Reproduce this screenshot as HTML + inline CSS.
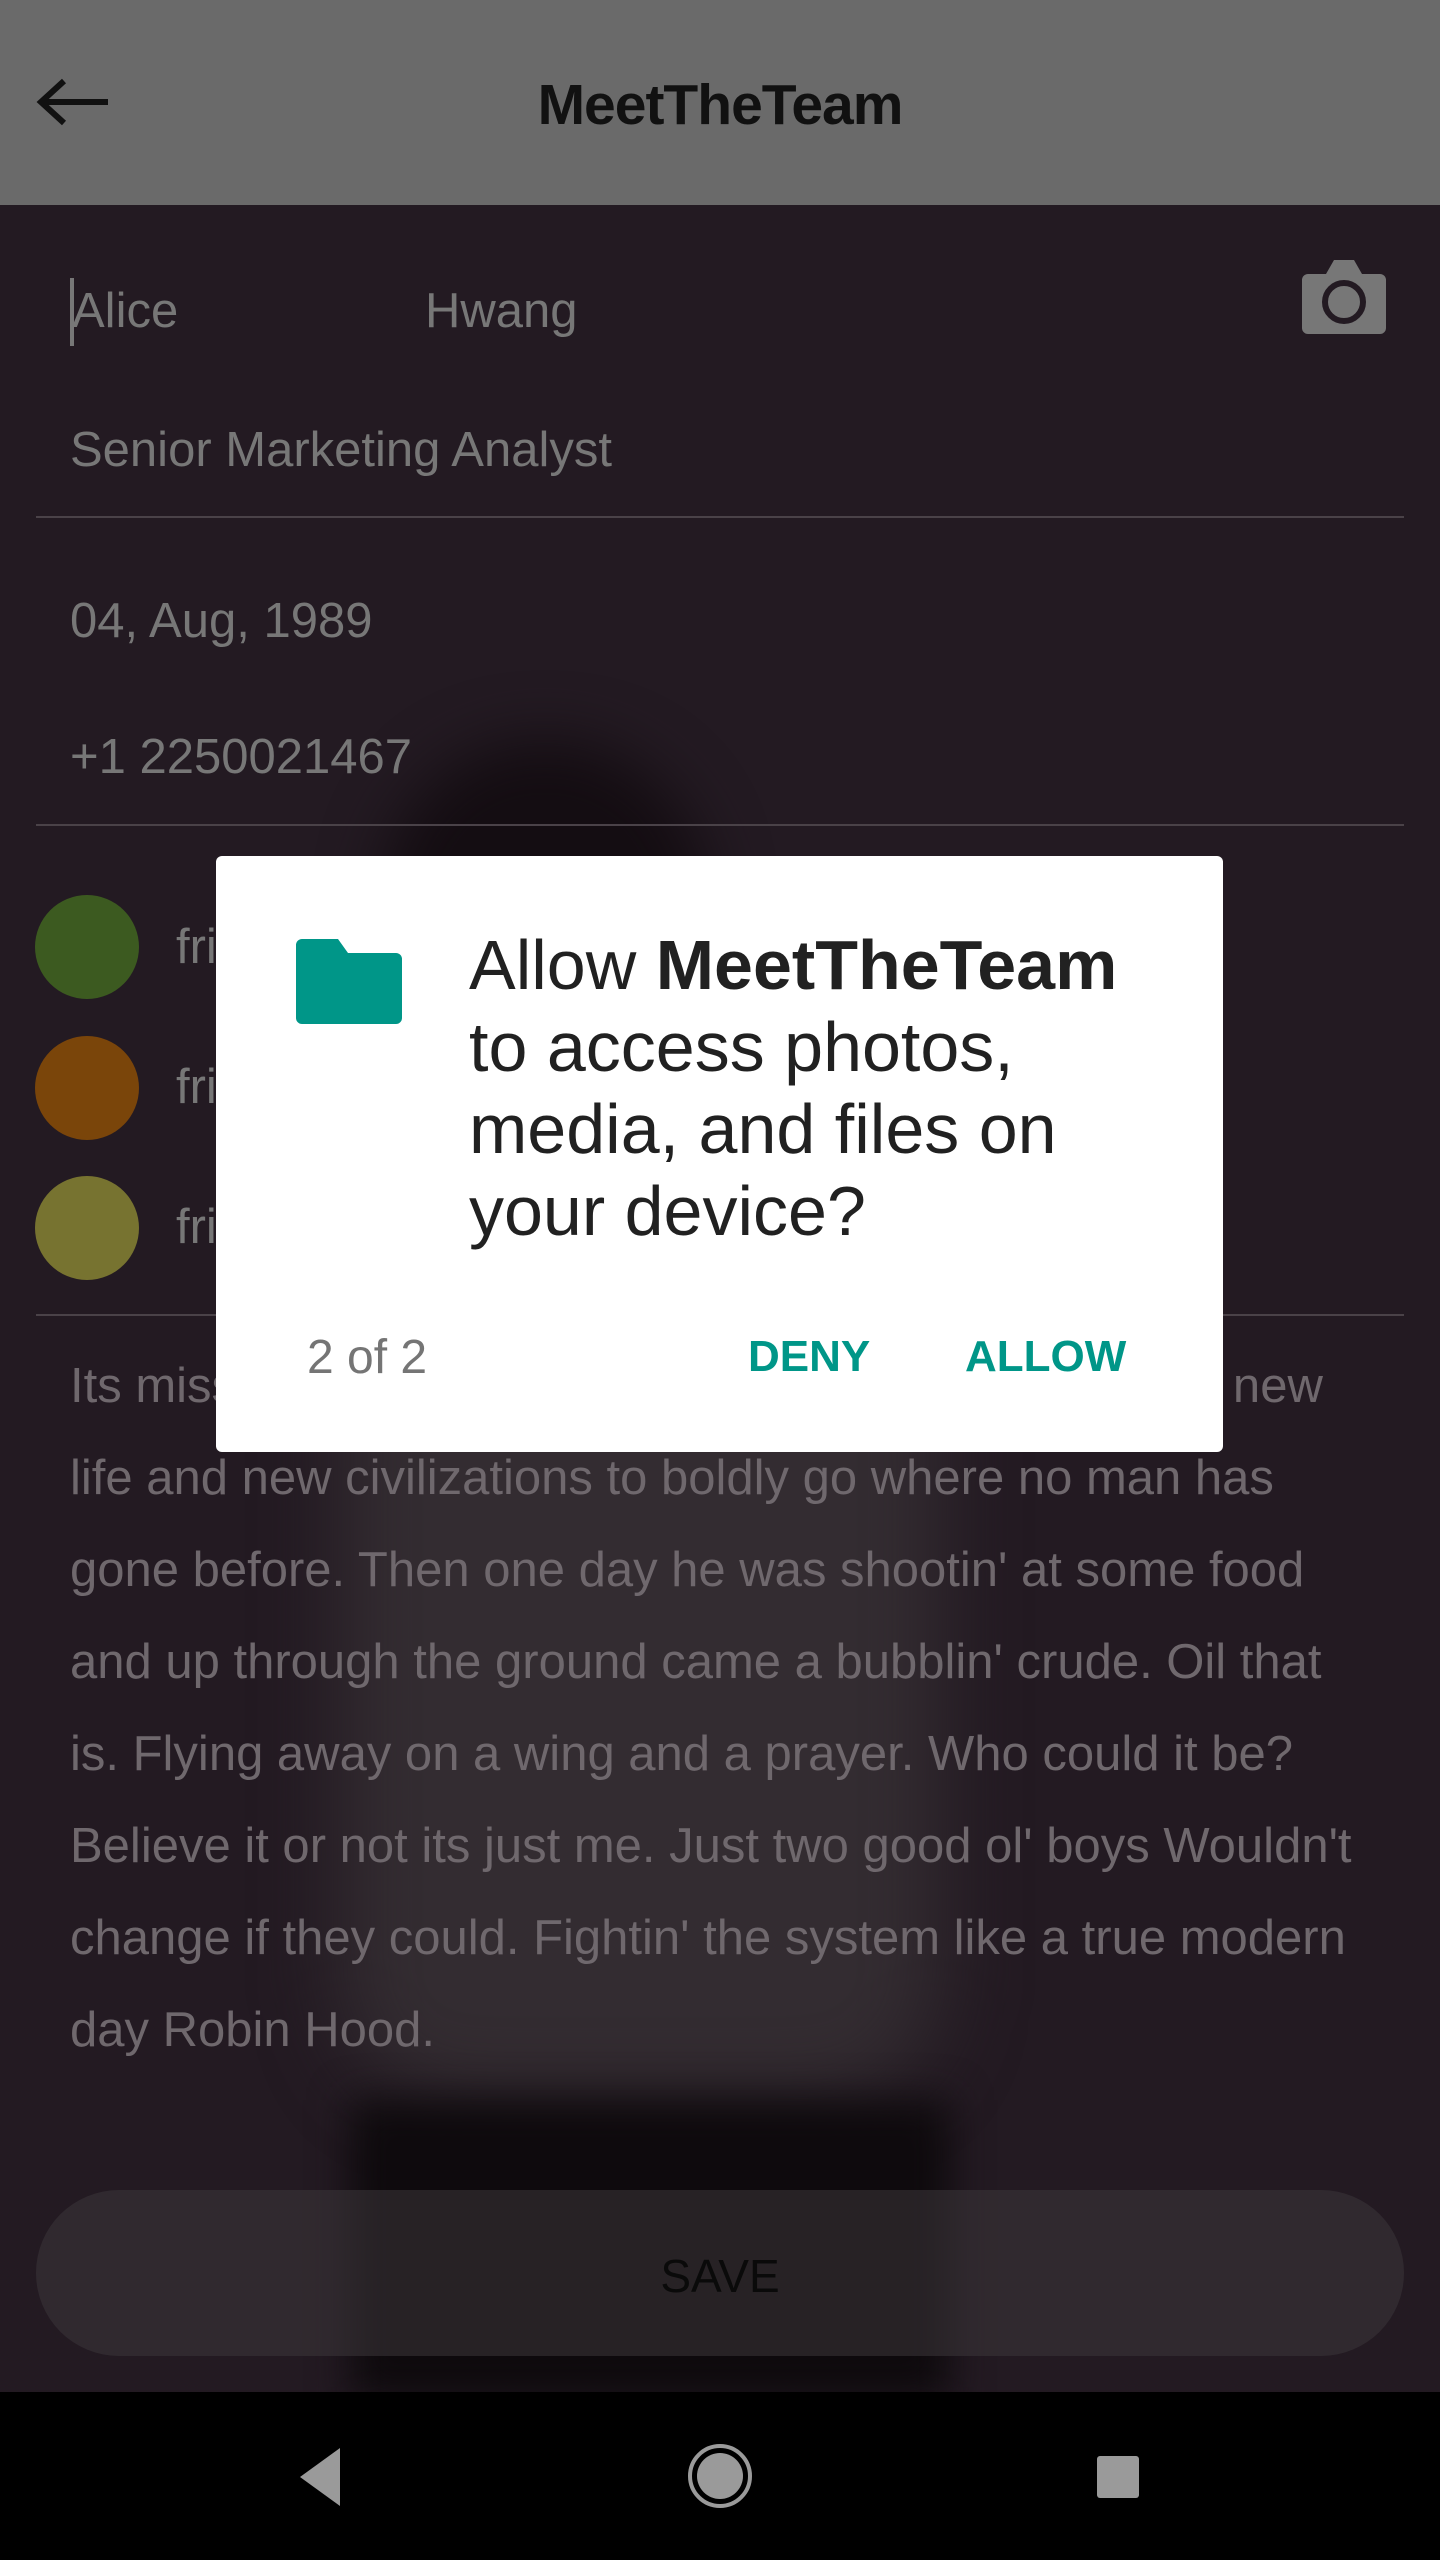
<!DOCTYPE html>
<html><head><meta charset="utf-8"><style>
*{margin:0;padding:0;box-sizing:border-box}
body{width:1440px;height:2560px;overflow:hidden;background:#231a22;font-family:"Liberation Sans",sans-serif;position:relative}
.abs{position:absolute}
.bar{left:0;top:0;width:1440px;height:205px;background:#6a6a6a}
.title{left:0;width:1440px;top:72px;text-align:center;font-size:57px;font-weight:bold;color:#111;letter-spacing:-1px}
.f{color:#777;font-size:49px;white-space:nowrap}
.line{left:36px;width:1368px;height:2px;background:#4a4248}
.circ{width:104px;height:104px;border-radius:52px;left:35px}
.p{left:70px;top:1340px;width:1380px;font-size:49px;line-height:92px;color:#6f686d;white-space:nowrap}
.dlg{left:216px;top:856px;width:1007px;height:596px;background:#fff;border-radius:6px}
.nav{left:0;top:2392px;width:1440px;height:168px;background:#000}
</style></head><body>
<div class="abs" style="left:380px;top:740px;width:330px;height:330px;border-radius:50%;background:#140d12;filter:blur(30px)"></div>
<div class="abs" style="left:340px;top:1300px;width:600px;height:800px;border-radius:120px;background:#332c31;filter:blur(40px)"></div>
<div class="abs" style="left:350px;top:2100px;width:600px;height:300px;background:#0e0a0d;filter:blur(20px)"></div>
<div class="abs bar"></div>
<svg class="abs" style="left:36px;top:78px" width="76" height="48" viewBox="0 0 76 48"><path d="M72 24H6M28 3L5 24l23 21" stroke="#111" stroke-width="6" fill="none"/></svg>
<div class="abs title">MeetTheTeam</div>
<div class="abs" style="left:70px;top:278px;width:4px;height:68px;background:#777"></div>
<div class="abs f" style="left:72px;top:283px">Alice</div>
<div class="abs f" style="left:425px;top:283px">Hwang</div>
<svg class="abs" style="left:1302px;top:258px" width="84" height="76" viewBox="0 0 84 76"><path d="M6 16h18l8-14h20l8 14h18a6 6 0 0 1 6 6v48a6 6 0 0 1-6 6H6a6 6 0 0 1-6-6V22a6 6 0 0 1 6-6z" fill="#777"/><circle cx="42" cy="44" r="19" fill="none" stroke="#231a22" stroke-width="6"/></svg>
<div class="abs f" style="left:70px;top:422px">Senior Marketing Analyst</div>
<div class="abs line" style="top:516px"></div>
<div class="abs f" style="left:70px;top:593px">04, Aug, 1989</div>
<div class="abs f" style="left:70px;top:729px">+1 2250021467</div>
<div class="abs line" style="top:824px"></div>
<div class="abs circ" style="top:895px;background:#3c5a20"></div>
<div class="abs circ" style="top:1036px;background:#7a450a"></div>
<div class="abs circ" style="top:1176px;background:#777330"></div>
<div class="abs f" style="left:176px;top:919px">fri</div>
<div class="abs f" style="left:176px;top:1059px">fri</div>
<div class="abs f" style="left:176px;top:1199px">fri</div>
<div class="abs line" style="top:1314px"></div>
<div class="abs p">Its mission to explore strange new worlds to seek out new<br>life and new civilizations to boldly go where no man has<br>gone before. Then one day he was shootin' at some food<br>and up through the ground came a bubblin' crude. Oil that<br>is. Flying away on a wing and a prayer. Who could it be?<br>Believe it or not its just me. Just two good ol' boys Wouldn't<br>change if they could. Fightin' the system like a true modern<br>day Robin Hood.</div>
<div class="abs" style="left:36px;top:2190px;width:1368px;height:166px;border-radius:83px;background:rgba(60,55,58,0.55)"></div>
<div class="abs" style="left:0;width:1440px;top:2249px;text-align:center;font-size:46px;color:#0a0a0a">SAVE</div>
<div class="abs nav"></div>
<svg class="abs" style="left:296px;top:2446px" width="48" height="62" viewBox="0 0 48 62"><path d="M44 2L4 31l40 29z" fill="#9a9a9a"/></svg>
<svg class="abs" style="left:686px;top:2442px" width="68" height="68" viewBox="0 0 68 68"><circle cx="34" cy="34" r="30" fill="none" stroke="#9a9a9a" stroke-width="4"/><circle cx="34" cy="34" r="23" fill="#9a9a9a"/></svg>
<div class="abs" style="left:1097px;top:2456px;width:42px;height:42px;border-radius:3px;background:#9a9a9a"></div>
<div class="abs dlg"></div>
<svg class="abs" style="left:296px;top:939px" width="106" height="85" viewBox="0 0 106 85"><path d="M6 0h36l10 14h48a6 6 0 0 1 6 6v59a6 6 0 0 1-6 6H6a6 6 0 0 1-6-6V6a6 6 0 0 1 6-6z" fill="#009688"/></svg>
<div class="abs" style="left:469px;top:924px;font-size:70px;line-height:82px;color:#212121;width:740px;white-space:nowrap">Allow <b>MeetTheTeam</b><br>to access photos,<br>media, and files on<br>your device?</div>
<div class="abs" style="left:307px;top:1330px;font-size:48px;color:#757575">2 of 2</div>
<div class="abs" style="left:748px;top:1332px;font-size:44px;font-weight:bold;color:#009688">DENY</div>
<div class="abs" style="left:965px;top:1332px;font-size:44px;font-weight:bold;color:#009688">ALLOW</div>
</body></html>
